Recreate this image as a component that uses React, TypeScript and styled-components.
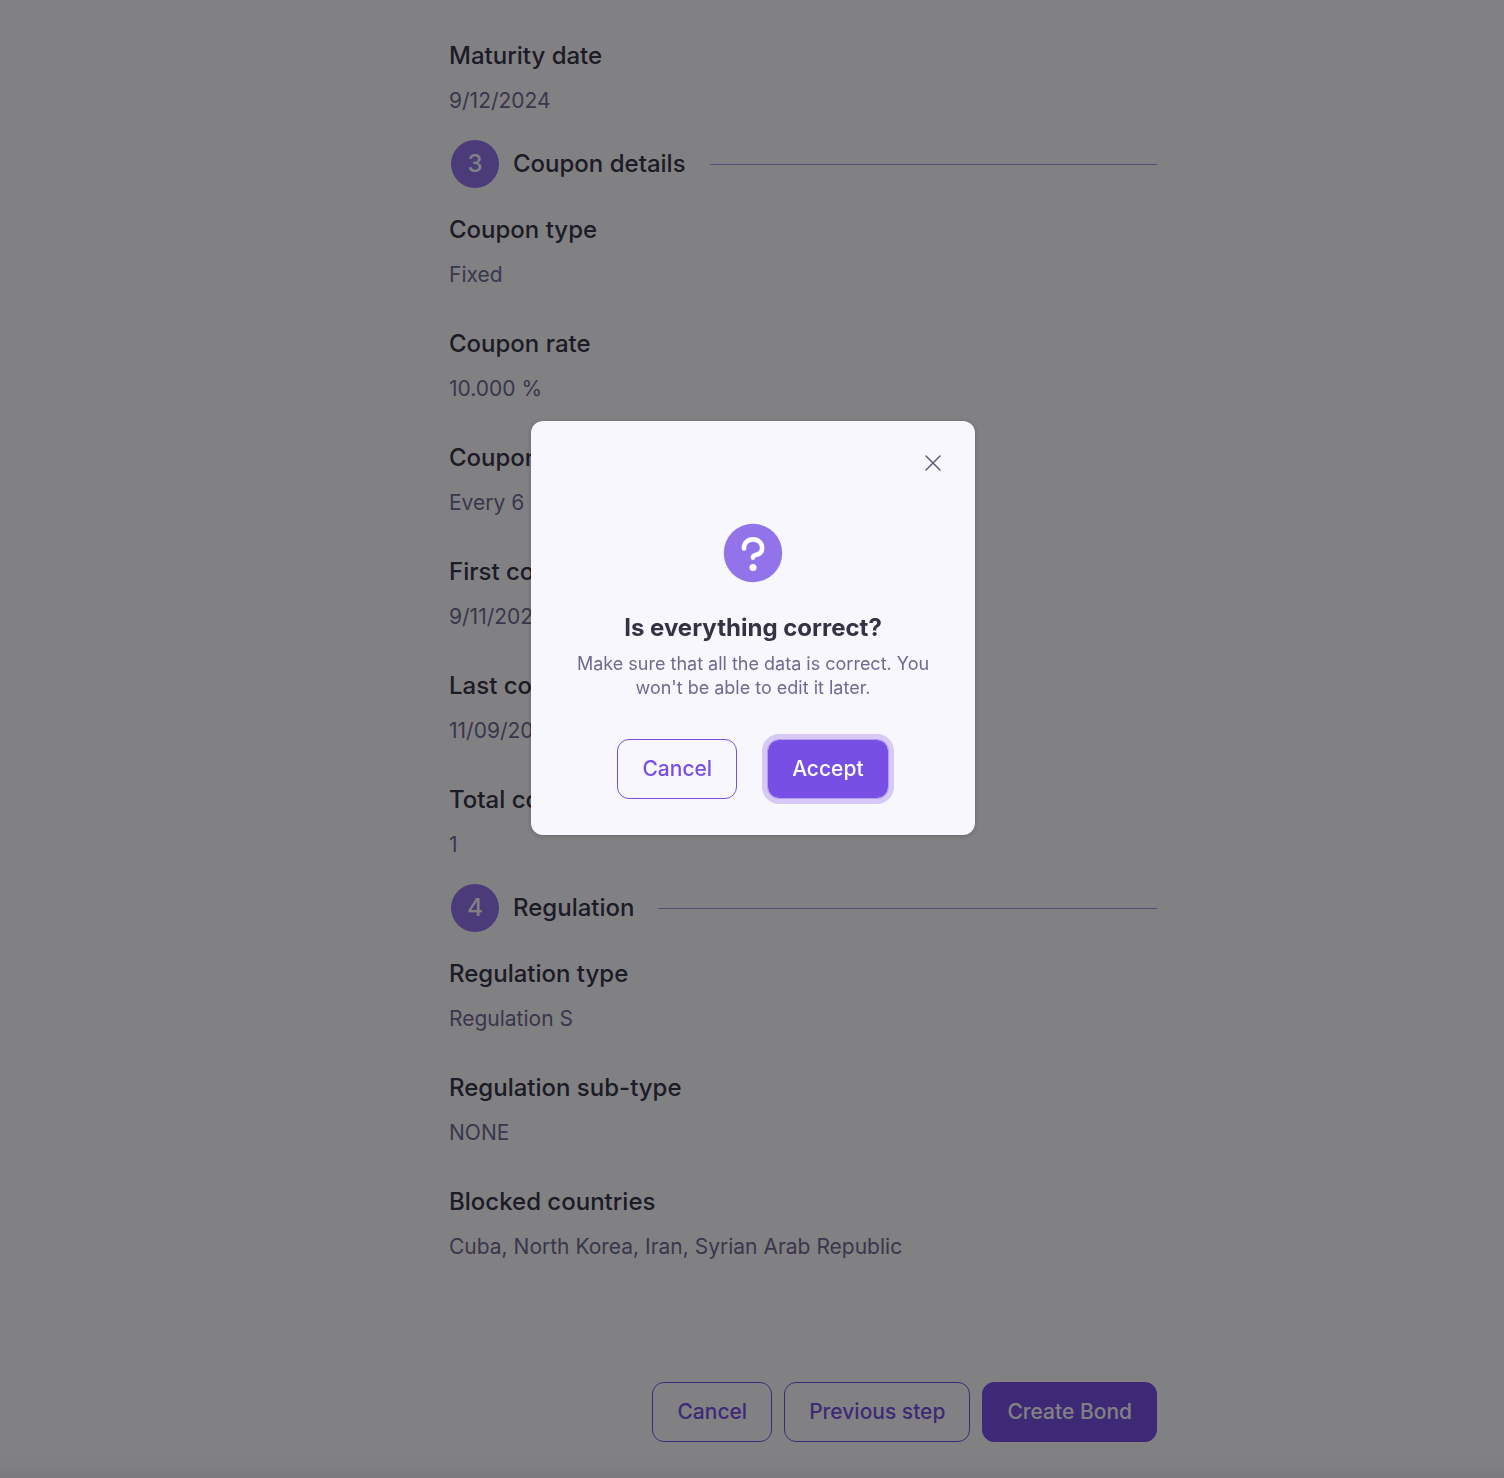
import React from "react";
import styled, { createGlobalStyle, css } from "styled-components";

const GlobalStyle = createGlobalStyle`
  *, *::before, *::after { box-sizing: border-box; }
  body {
    margin: 0;
    background: #ffffff;
    color: #343245;
    font-family: Inter, "Liberation Sans", sans-serif;
    -webkit-font-smoothing: antialiased;
  }
  h2, h3, p, dl, dt, dd { margin: 0; }
`;

const Page = styled.main`
  padding: 40px 0 36px 102px;
  box-shadow: inset 0 -24px 24px -24px rgba(0, 0, 0, 0.12);
`;

const Column = styled.div`
  max-width: 708px;
  margin: 0 auto;
`;

const Details = styled.dl`
  display: flex;
  flex-direction: column;
  gap: 40px;
`;

const Detail = styled.div`
  display: flex;
  flex-direction: column;
  gap: 16px;
`;

const Term = styled.dt`
  font-size: 24px;
  line-height: 32px;
  font-weight: 500;
`;

const Value = styled.dd`
  font-size: 21px;
  line-height: 26px;
  color: #716990;
`;

const SectionHeader = styled.header`
  display: flex;
  align-items: center;
  padding: 26px 0 26px 2px;
`;

const StepNumber = styled.span`
  width: 48px;
  height: 48px;
  margin-right: 14px;
  padding: 8px 0;
  border-radius: 50%;
  background: #9373ea;
  color: #ffffff;
  font-size: 24px;
  line-height: 32px;
  font-weight: 500;
  text-align: center;
`;

const SectionTitle = styled.h2`
  font-size: 24px;
  line-height: 32px;
  font-weight: 500;
`;

const Rule = styled.span`
  flex: 1;
  height: 1px;
  margin-left: 24px;
  background: #ac96ec;
`;

const Actions = styled.div<{ $align: string; $gap: number; $top: number }>`
  display: flex;
  justify-content: ${(p) => p.$align};
  gap: ${(p) => p.$gap}px;
  margin-top: ${(p) => p.$top}px;
`;

const Button = styled.button<{ $primary?: boolean; $ring?: boolean }>`
  height: 60px;
  padding: 0 24px;
  border: 1px solid #774fe5;
  border-radius: 12px;
  background: transparent;
  color: #774fe5;
  font-family: inherit;
  font-size: 21px;
  line-height: 26px;
  font-weight: 500;
  cursor: pointer;
  ${(p) => p.$primary && css`
    background: #774fe5;
    color: #ffffff;
  `}
  ${(p) => p.$ring && css`
    border-color: #b49df0;
    background-clip: padding-box;
    box-shadow: 0 0 0 5px #d6c9f6;
  `}
`;

const Overlay = styled.div`
  position: fixed;
  inset: 0;
  display: flex;
  align-items: flex-start;
  justify-content: center;
  padding: 421px 0 0 2px;
  background: rgba(4, 4, 8, 0.5);
`;

const Dialog = styled.section`
  display: flex;
  flex-direction: column;
  align-items: center;
  width: 444px;
  padding: 24px 24px 36px;
  border-radius: 12px;
  background: #f8f7fd;
  box-shadow: 0 1px 4px rgba(0, 0, 0, 0.2);
`;

const CloseButton = styled.button`
  display: flex;
  align-items: center;
  justify-content: center;
  align-self: flex-end;
  width: 36px;
  height: 36px;
  padding: 0;
  border: 0;
  background: transparent;
  color: #5f5a78;
  cursor: pointer;
`;

const QuestionIcon = styled.svg`
  width: 60px;
  height: 60px;
  margin-top: 42px;
`;

const DialogTitle = styled.h3`
  margin-top: 29px;
  font-size: 24px;
  line-height: 32px;
  font-weight: 700;
`;

const DialogText = styled.p`
  margin-top: 8px;
  font-size: 18px;
  line-height: 24px;
  text-align: center;
  color: #716990;
`;

type Entry = [string, string];

const maturity: Entry[] = [["Maturity date", "9/12/2024"]];
const coupon: Entry[] = [
  ["Coupon type", "Fixed"],
  ["Coupon rate", "10.000 %"],
  ["Coupon frequency", "Every 6 months"],
  ["First coupon date", "9/11/2024"],
  ["Last coupon date", "11/09/2024"],
  ["Total coupons", "1"],
];
const regulation: Entry[] = [
  ["Regulation type", "Regulation S"],
  ["Regulation sub-type", "NONE"],
  ["Blocked countries", "Cuba, North Korea, Iran, Syrian Arab Republic"],
];

const DetailList = ({ items }: { items: Entry[] }) => (
  <Details>
    {items.map(([term, value]) => (
      <Detail key={term}>
        <Term>{term}</Term>
        <Value>{value}</Value>
      </Detail>
    ))}
  </Details>
);

const Section = ({ step, title }: { step: number; title: string }) => (
  <SectionHeader>
    <StepNumber>{step}</StepNumber>
    <SectionTitle>{title}</SectionTitle>
    <Rule />
  </SectionHeader>
);

export default function App() {
  return (
    <>
      <GlobalStyle />
      <Page>
        <Column>
          <DetailList items={maturity} />
          <Section step={3} title="Coupon details" />
          <DetailList items={coupon} />
          <Section step={4} title="Regulation" />
          <DetailList items={regulation} />
          <Actions $align="flex-end" $gap={12} $top={122}>
            <Button type="button">Cancel</Button>
            <Button type="button">Previous step</Button>
            <Button type="button" $primary>Create Bond</Button>
          </Actions>
        </Column>
      </Page>
      <Overlay>
        <Dialog role="dialog" aria-modal="true" aria-labelledby="confirm-title">
          <CloseButton type="button" aria-label="Close">
            <svg width="18" height="18" viewBox="0 0 18 18" fill="none" stroke="currentColor" strokeWidth="1.5" strokeLinecap="round">
              <path d="M2 2 16 16M16 2 2 16" />
            </svg>
          </CloseButton>
          <QuestionIcon viewBox="0 0 60 60" fill="none" aria-hidden="true">
            <circle cx="30" cy="30" r="29.2" fill="#9373ea" />
            <path d="M21 25.5C20.6 20.2 24.8 16.4 30 16.4C35.3 16.4 39.2 20.2 39.2 24.8C39.2 29 36 31.3 32.6 32C30.8 32.4 30 33 30 34.6" stroke="#fff" strokeWidth="4.6" strokeLinecap="round" />
            <circle cx="30" cy="44.6" r="3.5" fill="#fff" />
          </QuestionIcon>
          <DialogTitle id="confirm-title">Is everything correct?</DialogTitle>
          <DialogText>Make sure that all the data is correct. You won't be able to edit it later.</DialogText>
          <Actions $align="center" $gap={30} $top={39}>
            <Button type="button">Cancel</Button>
            <Button type="button" $primary $ring>Accept</Button>
          </Actions>
        </Dialog>
      </Overlay>
    </>
  );
}
